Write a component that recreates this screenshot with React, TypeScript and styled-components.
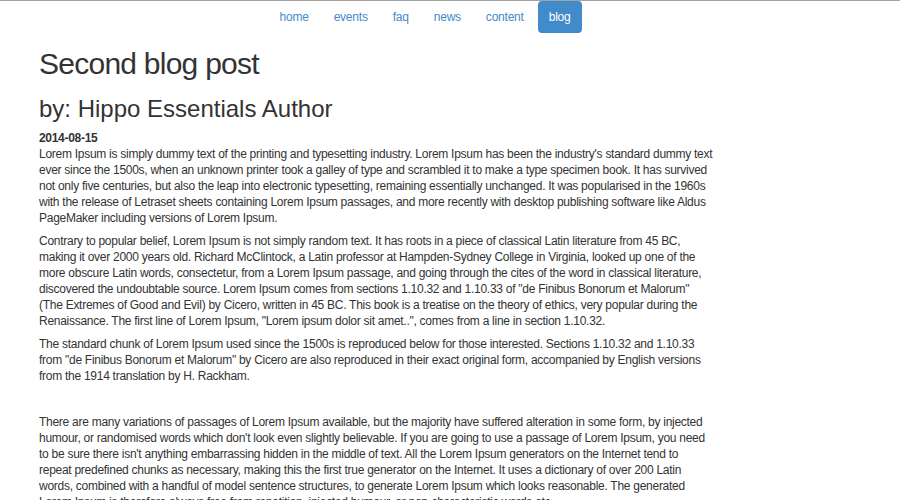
import React from "react";
import styled, { createGlobalStyle } from "styled-components";

const Global = createGlobalStyle`
  html, body { margin: 0; padding: 0; background: #fff; }
  body {
    font-family: "Liberation Sans", Arial, Helvetica, sans-serif;
    font-size: 12px;
    line-height: 16px;
    color: #333;
    letter-spacing: -0.27px;
  }
`;

const TopBar = styled.header`
  border-top: 1px solid #a3a3a3;
`;

const Nav = styled.ul`
  list-style: none;
  margin: 0;
  padding: 0 50px 0 0;
  display: flex;
  justify-content: center;
  gap: 3px;
`;

const NavLink = styled.a<{ $active?: boolean }>`
  display: block;
  padding: 8px 11px;
  line-height: 16px;
  font-size: 12px;
  letter-spacing: -0.22px;
  border-radius: 4px;
  text-decoration: none;
  color: ${(p) => (p.$active ? "#fff" : "#428bca")};
  background: ${(p) => (p.$active ? "#428bca" : "transparent")};
`;

const Main = styled.main`
  padding: 0 39px;
  max-width: 674px;
`;

const Title = styled.h1`
  font-size: 30px;
  line-height: 33px;
  font-weight: 400;
  letter-spacing: -0.75px;
  margin: 14px 0 16px;
`;

const Subtitle = styled.h2`
  font-size: 24px;
  line-height: 26px;
  font-weight: 400;
  letter-spacing: 0;
  margin: 0 0 8px;
`;

const PostDate = styled.div`
  font-weight: 700;
  letter-spacing: -0.3px;
`;

const Para = styled.p`
  margin: 0 0 7px;
`;

const links = ["home", "events", "faq", "news", "content", "blog"];

export default function App() {
  return (
    <>
      <Global />
      <TopBar>
        <Nav>
          {links.map((l) => (
            <li key={l}>
              <NavLink href="#" $active={l === "blog"}>
                {l}
              </NavLink>
            </li>
          ))}
        </Nav>
      </TopBar>
      <Main>
        <Title>Second blog post</Title>
        <Subtitle>by: Hippo Essentials Author</Subtitle>
        <PostDate>2014-08-15</PostDate>
        <Para>
          Lorem Ipsum is simply dummy text of the printing and typesetting industry. Lorem Ipsum has been the
          industry's standard dummy text ever since the 1500s, when an unknown printer took a galley of type and
          scrambled it to make a type specimen book. It has survived not only five centuries, but also the leap into
          electronic typesetting, remaining essentially unchanged. It was popularised in the 1960s with the release of
          Letraset sheets containing Lorem Ipsum passages, and more recently with desktop publishing software like Aldus
          PageMaker including versions of Lorem Ipsum.
        </Para>
        <Para>
          Contrary to popular belief, Lorem Ipsum is not simply random text. It has roots in a piece of classical Latin
          literature from 45 BC, making it over 2000 years old. Richard McClintock, a Latin professor at Hampden-Sydney
          College in Virginia, looked up one of the more obscure Latin words, consectetur, from a Lorem Ipsum passage,
          and going through the cites of the word in classical literature, discovered the undoubtable source. Lorem
          Ipsum comes from sections 1.10.32 and 1.10.33 of "de Finibus Bonorum et Malorum" (The Extremes of Good and
          Evil) by Cicero, written in 45 BC. This book is a treatise on the theory of ethics, very popular during the
          Renaissance. The first line of Lorem Ipsum, "Lorem ipsum dolor sit amet..", comes from a line in section
          1.10.32.
        </Para>
        <Para>
          The standard chunk of Lorem Ipsum used since the 1500s is reproduced below for those interested. Sections
          1.10.32 and 1.10.33 from "de Finibus Bonorum et Malorum" by Cicero are also reproduced in their exact original
          form, accompanied by English versions from the 1914 translation by H. Rackham.
        </Para>
        <Para>&nbsp;</Para>
        <Para>
          There are many variations of passages of Lorem Ipsum available, but the majority have suffered alteration in
          some form, by injected humour, or randomised words which don't look even slightly believable. If you are going
          to use a passage of Lorem Ipsum, you need to be sure there isn't anything embarrassing hidden in the middle of
          text. All the Lorem Ipsum generators on the Internet tend to repeat predefined chunks as necessary, making this
          the first true generator on the Internet. It uses a dictionary of over 200 Latin words, combined with a
          handful of model sentence structures, to generate Lorem Ipsum which looks reasonable. The generated Lorem
          Ipsum is therefore always free from repetition, injected humour, or non-characteristic words etc.
        </Para>
      </Main>
    </>
  );
}
